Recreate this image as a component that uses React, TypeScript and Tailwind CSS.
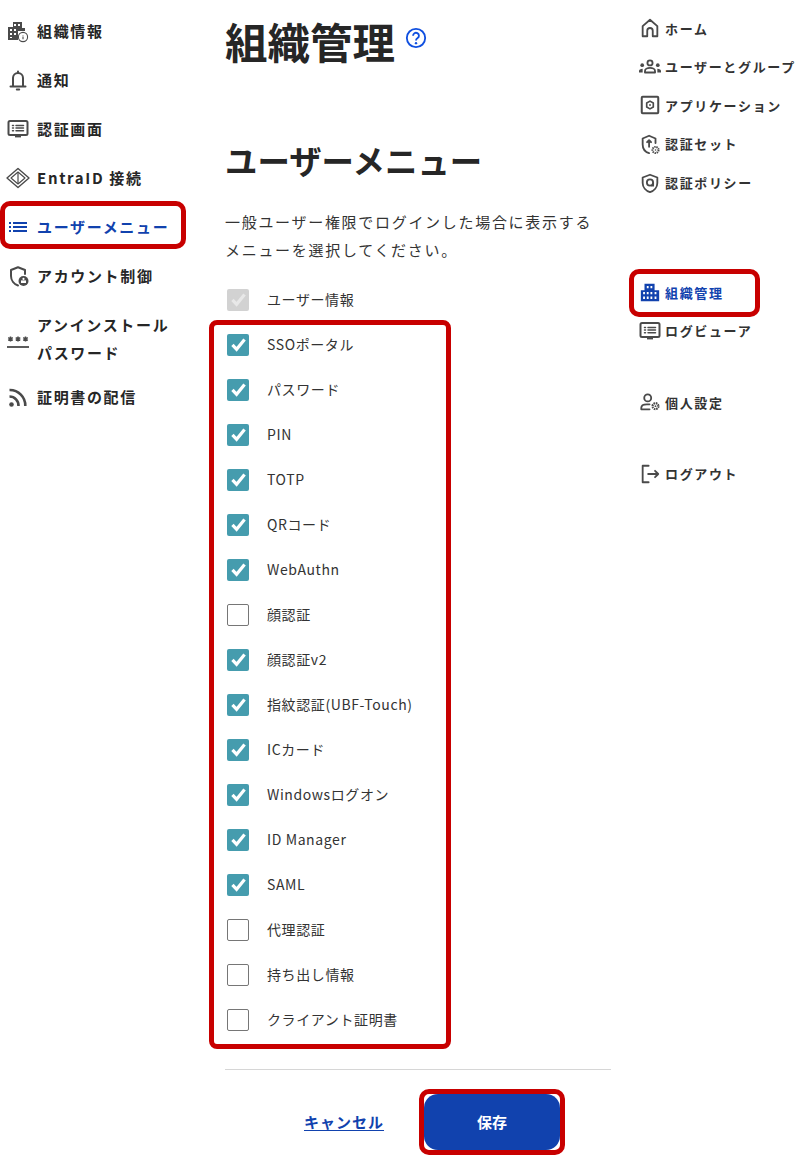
import React from 'react';

const FONT = 'font-["Noto_Sans_CJK_JP","Noto_Sans",sans-serif]';

const ic = { fill: 'none', stroke: 'currentColor', strokeWidth: 2, strokeLinecap: 'round', strokeLinejoin: 'round' } as const;

function OrgInfoIcon() {
  return (
    <svg width="24" height="24" viewBox="0 0 24 24" className="text-[#4a4a4a]">
      <path fill="currentColor" fillRule="evenodd" d="M2 8h5V3h9v6h3v3h-7v9H2zM4 10v2h2v-2zM8 5v2h2V5zM12 5v2h2V5zM8 10v2h2v-2zM4 14v2h2v-2zM8 14v2h2v-2zM4 18v1h2v-1z" />
      <circle cx="17" cy="18" r="4.6" fill="#fff" stroke="currentColor" strokeWidth="1.1" />
      <path d="M17 16v.6M17 17.6v2.6" stroke="currentColor" strokeWidth="1.1" />
    </svg>
  );
}
function BellIcon() {
  return (
    <svg width="24" height="24" viewBox="0 0 24 24" className="text-[#4a4a4a]">
      <path {...ic} d="M4.5 18.5h15M7 18.5V10a5 5 0 0 1 10 0v8.5M12 3.5V5M10.8 21.5h2.400" />
    </svg>
  );
}
function MonitorIcon() {
  return (
    <svg width="24" height="24" viewBox="0 0 24 24" className="text-[#4a4a4a]">
      <rect {...ic} x="2.500" y="4" width="19" height="14" rx="1.500" />
      <path {...ic} d="M6.500 8.500h1M10 8.500h7.500M6.500 11h1M10 11h7.500M6.500 13.700h1M10 13.700h7.500" strokeWidth="1.500" />
      <path d="M9 18h6v2.400H9z" fill="currentColor" />
    </svg>
  );
}
function DiamondIcon() {
  return (
    <svg width="24" height="24" viewBox="0 0 24 24" className="text-[#4a4a4a]">
      <path {...ic} strokeWidth="1.400" d="M12 2.500 23 12 12 21.500 1 12z" />
      <path {...ic} strokeWidth="1.100" d="M12 6 19 12 12 18 5 12z" />
      <path d="M11.200 6.500h1.600v11h-1.600z" fill="currentColor" opacity=".75" />
    </svg>
  );
}
function ListIcon() {
  return (
    <svg width="24" height="24" viewBox="0 0 24 24" className="text-[#1142ae]">
      <path fill="currentColor" d="M3 7h2v2H3zM7 7h14v2H7zM3 11h2v2H3zM7 11h14v2H7zM3 15h2v2H3zM7 15h14v2H7z" />
    </svg>
  );
}
function ShieldLockIcon() {
  return (
    <svg width="24" height="24" viewBox="0 0 24 24" className="text-[#4a4a4a]">
      <path {...ic} d="M12 21.500c-4-1.300-7-5-7-9.500V6l7-2.800L19 6v4" />
      <circle cx="17.500" cy="17" r="5" fill="#4a4a4a" />
      <rect x="15" y="16.400" width="5" height="2.600" fill="#fff" />
      <circle cx="17.500" cy="14.900" r="1.100" fill="#fff" />
    </svg>
  );
}
function PasswordIcon() {
  return (
    <svg width="26" height="24" viewBox="0 0 26 24" className="text-[#4a4a4a]">
      <path d="M2 20h22" stroke="currentColor" strokeWidth="1.800" />
      <g fill="none" stroke="currentColor" strokeWidth="1.500">
        <path d="M5.500 9.500v5M3.200 10.700l4.600 2.600M7.800 10.700l-4.600 2.600" />
        <path d="M13 9.500v5M10.700 10.700l4.600 2.600M15.300 10.700l-4.600 2.600" />
        <path d="M20.500 9.500v5M18.200 10.700l4.600 2.600M22.800 10.700l-4.600 2.600" />
      </g>
    </svg>
  );
}
function RssIcon() {
  return (
    <svg width="24" height="24" viewBox="0 0 24 24" className="text-[#4a4a4a]">
      <circle cx="5.500" cy="19.500" r="2.300" fill="currentColor" />
      <path fill="none" stroke="currentColor" strokeWidth="2.600" d="M3.500 11.500a9 9 0 0 1 9 9.500M3.500 5a15.500 15.500 0 0 1 15.800 16" />
    </svg>
  );
}
function HomeIcon() {
  return (
    <svg width="22" height="22" viewBox="0 0 24 24" className="text-[#4a4a4a]">
      <path {...ic} d="M4 21V10l8-7 8 7v11h-5v-6a3 3 0 0 0-6 0v6z" />
    </svg>
  );
}
function GroupIcon() {
  return (
    <svg width="26" height="22" viewBox="0 0 26 24" className="text-[#4a4a4a]">
      <circle {...ic} cx="13" cy="7.500" r="2.800" />
      <path {...ic} d="M7.500 18v-1.500c0-2 2.500-3.500 5.500-3.500s5.500 1.500 5.500 3.500V18z" />
      <circle cx="4.500" cy="10" r="2" fill="currentColor" />
      <circle cx="21.500" cy="10" r="2" fill="currentColor" />
      <path fill="currentColor" d="M1 18v-1.500c0-1.500 1.500-2.500 4-2.500v4zM25 18v-1.500c0-1.500-1.500-2.500-4-2.500v4z" />
    </svg>
  );
}
function AppIcon() {
  return (
    <svg width="22" height="22" viewBox="0 0 24 24" className="text-[#4a4a4a]">
      <rect {...ic} x="3" y="3" width="18" height="18" rx="1" strokeWidth="2.200" />
      <path {...ic} strokeWidth="1.800" d="m12 7.800 3.600 2.100v4.200L12 16.200l-3.600-2.100V9.900z" />
      <circle cx="12" cy="12" r="1" fill="currentColor" />
    </svg>
  );
}
function ShieldGearIcon() {
  return (
    <svg width="22" height="22" viewBox="0 0 24 24" className="text-[#4a4a4a]">
      <path {...ic} d="M11 22c-4-1.300-7-5-7-9.500V6l7-3 7 3v5" />
      <path {...ic} d="M11 15V8M8.800 10 11 7.800l2.200 2.200" />
      <circle cx="18" cy="18.500" r="3.300" fill="none" stroke="currentColor" strokeWidth="2.200" strokeDasharray="1.500 .8" />
      <circle cx="18" cy="18.500" r=".9" fill="currentColor" />
    </svg>
  );
}
function ShieldAtIcon() {
  return (
    <svg width="22" height="22" viewBox="0 0 24 24" className="text-[#4a4a4a]">
      <path {...ic} d="M12 22c-4.500-1.400-8-5.300-8-10V6l8-3 8 3v6c0 4.700-3.500 8.600-8 10z" />
      <circle cx="12" cy="11.500" r="3.400" fill="none" stroke="currentColor" strokeWidth="2" />
      <path d="M15.400 11.500v3.400h-2" fill="none" stroke="currentColor" strokeWidth="2" />
    </svg>
  );
}
function BuildingIcon() {
  return (
    <svg width="22" height="22" viewBox="0 0 24 24" className="text-[#1142ae]">
      <path fill="currentColor" fillRule="evenodd" d="M2 22V10h4V3h11v7h5v12zM8.500 5.500v2.500h2V5.500zM12.500 5.500v2.500h2V5.500zM4.500 12v2.500h2V12zM8.500 12v2.500h2V12zM12.500 12v2.500h2V12zM17 12v2.500h2V12zM4.500 17v2.500h2V17zM8.500 17v2.500h2V17zM12.500 17v2.500h2V17zM17 17v2.500h2V17z" />
    </svg>
  );
}
function UserGearIcon() {
  return (
    <svg width="24" height="22" viewBox="0 0 24 24" className="text-[#4a4a4a]">
      <circle {...ic} cx="9.500" cy="7.500" r="3.800" />
      <path {...ic} d="M11.500 14.500h-3C5 14.500 2.500 16 2.500 18.200V20h9" />
      <circle cx="18" cy="16.500" r="3.200" fill="none" stroke="currentColor" strokeWidth="2.400" strokeDasharray="1.700 .8" />
      <circle cx="18" cy="16.500" r="1" fill="currentColor" />
    </svg>
  );
}
function LogoutIcon() {
  return (
    <svg width="22" height="22" viewBox="0 0 24 24" className="text-[#4a4a4a]">
      <path {...ic} d="M10.500 3H4v18h6.500M10 12h11M17.500 8.500 21 12l-3.500 3.500" />
    </svg>
  );
}

function Annotated({ className, children }: { className: string; children: React.ReactNode }) {
  return (
    <div className="relative">
      <div className={`absolute border-[5px] border-[#c80000] pointer-events-none ${className}`} />
      {children}
    </div>
  );
}

function SideItem({ icon, active, children }: { icon: React.ReactNode; active?: boolean; children: React.ReactNode }) {
  return (
    <div className={`flex items-center gap-[6px] pl-[5px] w-[190px] min-h-[49px] text-[15px] leading-[28px] font-bold tracking-[1.650px] ${active ? 'text-[#1142ae]' : 'text-[#262626]'}`}>
      <span className="w-[26px] flex justify-center shrink-0">{icon}</span>
      <span>{children}</span>
    </div>
  );
}

function TopItem({ icon, active, children }: { icon: React.ReactNode; active?: boolean; children: React.ReactNode }) {
  return (
    <div className={`flex items-center gap-[2px] h-[38.600px] text-[13px] font-bold tracking-[1.650px] whitespace-nowrap ${active ? 'text-[#1142ae]' : 'text-[#333333]'}`}>
      <span className="w-[26px] flex justify-center shrink-0">{icon}</span>
      <span>{children}</span>
    </div>
  );
}

const items: [string, boolean][] = [
  ['SSOポータル', true],
  ['パスワード', true],
  ['PIN', true],
  ['TOTP', true],
  ['QRコード', true],
  ['WebAuthn', true],
  ['顔認証', false],
  ['顔認証v2', true],
  ['指紋認証(UBF-Touch)', true],
  ['ICカード', true],
  ['Windowsログオン', true],
  ['ID Manager', true],
  ['SAML', true],
  ['代理認証', false],
  ['持ち出し情報', false],
  ['クライアント証明書', false],
];

function Check({ label, checked, disabled }: { label: string; checked: boolean; disabled?: boolean }) {
  return (
    <div className="flex items-center h-[45px] pl-[2px]">
      <span className={`w-[22px] h-[22px] rounded-[2px] flex items-center justify-center shrink-0 ${disabled ? 'bg-[#d2d2d2]' : checked ? 'bg-[#459cae]' : 'bg-white border border-[#767676]'}`}>
        {checked && (
          <svg width="17" height="17" viewBox="0 0 16 16">
            <path d="M2.300 8.300 6.200 12.500 13.700 3.300" fill="none" stroke={disabled ? '#e8e8e8' : '#ffffff'} strokeWidth="3" />
          </svg>
        )}
      </span>
      <span className="ml-[18px] text-[14px] tracking-[.6px] text-[#333333]">{label}</span>
    </div>
  );
}

export default function App() {
  return (
    <div className={`${FONT} flex w-[795px] h-[1155px] overflow-hidden bg-white`}>
      <nav className="w-[225px] shrink-0 pt-[6px]">
        <SideItem icon={<OrgInfoIcon />}>組織情報</SideItem>
        <SideItem icon={<BellIcon />}>通知</SideItem>
        <SideItem icon={<MonitorIcon />}>認証画面</SideItem>
        <SideItem icon={<DiamondIcon />}>EntraID 接続</SideItem>
        <Annotated className="left-0 top-[-1.500px] w-[186px] h-[48px] rounded-[10px]">
          <SideItem icon={<ListIcon />} active>ユーザーメニュー</SideItem>
        </Annotated>
        <SideItem icon={<ShieldLockIcon />}>アカウント制御</SideItem>
        <div className="h-[72px] pt-[5px] flex items-center">
          <SideItem icon={<PasswordIcon />}>アンインストール<br />パスワード</SideItem>
        </div>
        <SideItem icon={<RssIcon />}>証明書の配信</SideItem>
      </nav>

      <main className="w-[386px] shrink-0">
        <div className="flex items-center h-[82px]">
          <h1 className="text-[42.500px] leading-[60px] font-bold text-[#262626]">組織管理</h1>
          <svg width="22" height="22" viewBox="0 0 24 24" className="ml-[10px] mt-[-6px] text-[#0f4fe0]">
            <circle cx="12" cy="12" r="10" fill="none" stroke="currentColor" strokeWidth="2" />
            <path d="M8.800 9.500a3.200 3.200 0 1 1 5 2.600c-1.200.8-1.800 1.400-1.800 2.700" fill="none" stroke="currentColor" strokeWidth="2" />
            <circle cx="12" cy="17.600" r="1.300" fill="currentColor" />
          </svg>
        </div>
        <h2 className="mt-[54px] text-[32.400px] leading-[48px] font-bold text-[#262626]">ユーザーメニュー</h2>
        <p className="mt-[24px] text-[15px] leading-[28px] tracking-[1.700px] text-[#333333]">
          一般ユーザー権限でログインした場合に表示する<br />メニューを選択してください。
        </p>
        <div className="mt-[13px]">
          <Check label="ユーザー情報" checked disabled />
          <Annotated className="left-[-16px] top-[-2.500px] w-[242px] h-[729px] rounded-[8px]">
            {items.map(([label, checked]) => (
              <Check key={label} label={label} checked={checked} />
            ))}
          </Annotated>
        </div>
        <div className="mt-[27px] border-t border-[#d6d6d6] flex items-center pt-[24px]">
          <a className="ml-[79px] text-[15px] font-bold tracking-[1px] text-[#1142ae] underline underline-offset-2">キャンセル</a>
          <div className="ml-[40px]">
            <Annotated className="-inset-[5px] rounded-[10px]">
              <button className="w-[136px] h-[56px] rounded-[14px] bg-[#1142ae] text-white text-[15px] font-bold">保存</button>
            </Annotated>
          </div>
        </div>
      </main>

      <aside className="pl-[26px] pt-[9px] flex-1">
        <TopItem icon={<HomeIcon />}>ホーム</TopItem>
        <TopItem icon={<GroupIcon />}>ユーザーとグループ</TopItem>
        <TopItem icon={<AppIcon />}>アプリケーション</TopItem>
        <TopItem icon={<ShieldGearIcon />}>認証セット</TopItem>
        <TopItem icon={<ShieldAtIcon />}>認証ポリシー</TopItem>
        <div className="mt-[71px]">
          <Annotated className="left-[-8px] top-[-4px] w-[131px] h-[48px] rounded-[10px]">
            <TopItem icon={<BuildingIcon />} active>組織管理</TopItem>
          </Annotated>
          <TopItem icon={<MonitorIcon />}>ログビューア</TopItem>
        </div>
        <div className="mt-[33px]">
          <TopItem icon={<UserGearIcon />}>個人設定</TopItem>
        </div>
        <div className="mt-[33px]">
          <TopItem icon={<LogoutIcon />}>ログアウト</TopItem>
        </div>
      </aside>
    </div>
  );
}
